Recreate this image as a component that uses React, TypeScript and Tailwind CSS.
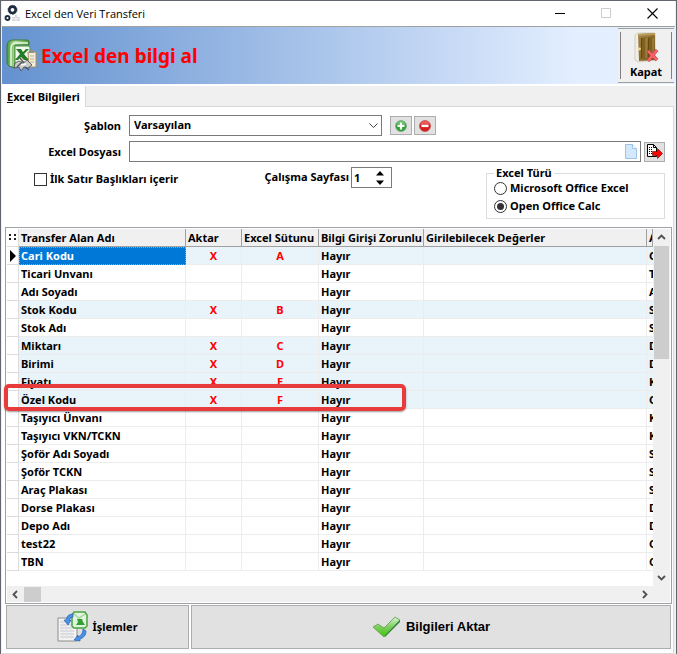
import type { ReactNode } from 'react'

type Row = { name: string; column?: string; next: string }

const rows: Row[] = [
    { name: 'Cari Kodu', column: 'A', next: 'C' },
    { name: 'Ticari Unvanı', next: 'T' },
    { name: 'Adı Soyadı', next: 'A' },
    { name: 'Stok Kodu', column: 'B', next: 'S' },
    { name: 'Stok Adı', next: 'S' },
    { name: 'Miktarı', column: 'C', next: 'D' },
    { name: 'Birimi', column: 'D', next: 'D' },
    { name: 'Fiyatı', column: 'E', next: 'K' },
    { name: 'Özel Kodu', column: 'F', next: 'C' },
    { name: 'Taşıyıcı Ünvanı', next: 'K' },
    { name: 'Taşıyıcı VKN/TCKN', next: 'K' },
    { name: 'Şoför Adı Soyadı', next: 'S' },
    { name: 'Şoför TCKN', next: 'S' },
    { name: 'Araç Plakası', next: 'S' },
    { name: 'Dorse Plakası', next: 'D' },
    { name: 'Depo Adı', next: 'D' },
    { name: 'test22', next: 'C' },
    { name: 'TBN', next: 'C' },
]

function GearsIcon() {
    return (
        <svg width="17" height="17" viewBox="0 0 17 17">
            <circle cx="8.500" cy="4.800" r="3.2" fill="none" stroke="#1f2c40" strokeWidth="2.6" />
            <circle cx="8.500" cy="4.800" r="4.500" fill="none" stroke="#1f2c40" strokeWidth=".8" strokeDasharray="1.8 1" />
            <circle cx="3.500" cy="13" r="2" fill="none" stroke="#1f2c40" strokeWidth="1.9" />
            <path d="M8 12h3v-2h2v2h3v4H8z" fill="#d3d5d8" />
            <path d="M8 14h8M12 12v4" stroke="#f4f4f4" />
        </svg>
    )
}

function ExcelIcon() {
    return (
        <svg width="31" height="33" viewBox="0 0 31 33">
            <defs>
                <linearGradient id="book" x1="0" y1="0" x2="1" y2="0">
                    <stop offset="0" stopColor="#4b9a3c" />
                    <stop offset=".4" stopColor="#b5e09f" />
                    <stop offset="1" stopColor="#4e9a3d" />
                </linearGradient>
            </defs>
            <path d="M1 6Q2 1 7 1h14q2 0 2 2v3H9v23l-6-2q-2-1-2-4z" fill="url(#book)" stroke="#3d7c35" />
            <path d="M5 27V9q0-5 5-5h12" fill="none" stroke="#e6f7df" strokeWidth="1.5" />
            <path d="M9 7h13q2 0 2 2v18H9z" fill="#f3f8ee" stroke="#4d9a3f" />
            <path d="M10 10h5l2 3 3-3h3l-5 5 5 6h-5l-3-3-3 3h-3l5-6z" fill="#267b27" />
            <path d="M22 13h8v15h-7z" fill="#f6edd6" stroke="#a48d62" />
            <path d="M23 11h5v3h-5z" fill="#90908c" />
            <path d="M24 17h4M24 20h4M24 23h4" stroke="#b5ae98" />
            <path d="M9 24l4-2 4 2 4-3 5 5-4 3-4-1-3 4-2-4-5 1z" fill="#c9cccb" stroke="#444747" strokeWidth=".8" />
            <path d="M14 19l4 5M11 28l5-5M19 28l4 3" stroke="#555" strokeWidth="1.4" />
            <path d="M15 26l5-1" stroke="#fff" strokeWidth="1.5" />
        </svg>
    )
}

function DoorIcon() {
    return (
        <svg width="26" height="32" viewBox="0 0 26 32">
            <defs>
                <linearGradient id="door" x1="0" y1="0" x2="1" y2="1">
                    <stop offset="0" stopColor="#a68646" />
                    <stop offset="1" stopColor="#77561a" />
                </linearGradient>
            </defs>
            <path d="M2 3l3-2h17v27l-16 2-4-2z" fill="#f0eee8" stroke="#c6bda5" strokeWidth=".7" />
            <path d="M5 2l17-1v27L6 29z" fill="url(#door)" />
            <path d="M5 2l17-1v2L5 4z" fill="#b99b5b" />
            <path d="M8 6l5-.5v21L8 27zM15 5.500l5-.5v20l-5 1z" fill="#80601f" />
            <path d="M8.500 6v20M15.500 6v19" stroke="#634610" />
            <path d="M13 6v20M20 6v19" stroke="#a98b4a" />
            <circle cx="6.500" cy="17" r="1.4" fill="#f1dd8f" />
            <path d="M15 19l9 9M24 18l-9 11" stroke="#c8414b" strokeWidth="3.500" />
            <path d="M15 19l9 9M24 18l-9 11" stroke="#fa6269" strokeWidth="2.2" />
        </svg>
    )
}

function RoundIcon({ minus }: { minus?: boolean }) {
    return (
        <svg width="12" height="12" viewBox="0 0 12 12">
            <circle cx="6" cy="6" r="5.5" fill={minus ? '#d91c1c' : '#2fa135'} stroke={minus ? '#ba4a4a' : '#78a97a'} strokeWidth=".7" />
            <path d="M1.5 5a4.5 4.5 0 0 1 9 0z" fill={minus ? '#f18080' : '#8fd08f'} opacity=".6" />
            <path d={minus ? 'M2.5 6h7' : 'M2.5 6h7M6 2.5v7'} stroke="#fff" strokeWidth="2.2" />
        </svg>
    )
}

function PageIcon() {
    return (
        <svg width="12" height="15" viewBox="0 0 12 15">
            <path d="M.5.5h7l4 4v10H.5z" fill="#d3e8fb" stroke="#9dc3e6" />
            <path d="M7.5.5v4h4" fill="#fff" stroke="#9dc3e6" />
        </svg>
    )
}

function ExportIcon() {
    return (
        <svg width="16" height="15" viewBox="0 0 16 15">
            <path d="M.5.5h6l3 3v9h-9z" fill="#fff" stroke="#000" />
            <path d="M6.5.5v3h3" fill="none" stroke="#000" />
            <path d="M2 3.5h3M2 5.5h3M2 7.5h3M2 9.5h3" stroke="#000" strokeDasharray="1 1" />
            <path d="M5.5 7.5h5v-3l5 5-5 5v-3h-5z" fill="#f00" stroke="#600" strokeWidth=".6" />
        </svg>
    )
}

function TransferIcon() {
    return (
        <svg width="31" height="32" viewBox="0 0 31 32">
            <path d="M1 7h19v23H1z" fill="#f4f4f4" stroke="#8c8c8c" />
            <path d="M3 11h14M3 14h14M3 17h14M3 20h14M3 23h14M3 26h14" stroke="#c3c5cb" />
            <path d="M6 9v19M10 9v19M14 9v19" stroke="#dedfe2" />
            <path d="M26 18q0 6-5 8v-2l-4 5 6 1v-2q6-2 6-8z" fill="#4b91e8" stroke="#2360ad" strokeWidth=".7" />
            <path d="M17 1h11l2 3v11l-2 2H17l-2-2V4z" fill="#e2f4dd" stroke="#45a541" strokeWidth="1.5" />
            <path d="M17 3l5 4 6-4" fill="none" stroke="#a3d59e" strokeWidth="1.5" />
            <path d="M20 8h5l1 3 2 3h-9l2-3z" fill="#359e36" />
            <path d="M16 3q-6 0-7 6H7l4 5 3-5h-2q1-3 4-3z" fill="#4b91e8" stroke="#2360ad" strokeWidth=".7" />
        </svg>
    )
}

function CheckIcon() {
    return (
        <svg width="29" height="22" viewBox="0 0 29 22">
            <defs>
                <linearGradient id="tick" x1="0" y1="0" x2="0" y2="1">
                    <stop offset="0" stopColor="#d8f0d2" />
                    <stop offset=".5" stopColor="#7ccf5e" />
                    <stop offset="1" stopColor="#3fc400" />
                </linearGradient>
            </defs>
            <path d="M1 11l5-3 6 4L23 1l5 3-16 17z" fill="url(#tick)" stroke="#5d9d50" strokeWidth=".8" />
            <path d="M13 19.500L28 4v2L13 21z" fill="#2f7f3b" />
        </svg>
    )
}

function Arrow({ d }: { d: string }) {
    return (
        <svg width="9" height="9" viewBox="0 0 9 9" fill="none" stroke="#505050" strokeWidth="1.8">
            <path d={d} />
        </svg>
    )
}

function HeadCell({ children }: { children?: ReactNode }) {
    return (
        <th className="overflow-hidden border-r border-b border-[#a0a0a0] bg-[#f0f0f0] px-[2px] text-left whitespace-nowrap">
            {children}
        </th>
    )
}

function TitleBar() {
    return (
        <div className="flex h-[26px] items-center border-b border-[#a0a0a0] bg-white pl-[2px]">
            <GearsIcon />
            <span className="ml-1 flex-1 font-['Open_Sans'] text-[11px] font-normal">Excel den Veri Transferi</span>
            <button aria-label="Simge durumuna küçült" className="flex w-[46px] justify-center">
                <svg width="11" height="11" stroke="#000"><path d="M0 5.5h10" /></svg>
            </button>
            <button aria-label="Ekranı kapla" className="flex w-[46px] justify-center">
                <svg width="11" height="11" fill="none" stroke="#ccc"><path d="M.5.5h9v9h-9z" /></svg>
            </button>
            <button aria-label="Pencereyi kapat" className="flex w-[46px] justify-center">
                <svg width="11" height="11" stroke="#000" strokeWidth="1.1"><path d="M.5.5l10 10M10.5.5l-10 10" /></svg>
            </button>
        </div>
    )
}

function Banner() {
    return (
        <div className="flex h-[57px] items-center bg-linear-to-r from-[#6492cf] to-[#e3eeff] to-85% pl-1">
            <ExcelIcon />
            <h1 className="ml-1 flex-1 font-['Noto_Sans'] text-[19px] font-bold text-[#ff0000]">Excel den bilgi al</h1>
            <button className="mr-[1px] flex h-[55px] w-[56px] border-y border-[#a0a0a0] bg-[#f0f0f0] px-[2px] py-[3px]">
                <span className="flex h-full flex-1 flex-col items-center justify-between border-x border-[#808080]">
                    <DoorIcon />
                    <span className="leading-[14px]">Kapat</span>
                </span>
            </button>
        </div>
    )
}

function Form() {
    return (
        <form className="flex flex-col gap-[5px] pt-2 pr-2">
            <div className="flex items-center">
                <label htmlFor="template" className="mr-2 w-[119px] text-right">Şablon</label>
                <div className="relative w-[253px]">
                    <select id="template" className="block h-[21px] w-full appearance-none border border-[#7a7a7a] bg-white px-1 pb-[2px] leading-[16px]">
                        <option>Varsayılan</option>
                    </select>
                    <svg className="pointer-events-none absolute top-2 right-1" width="9" height="6" fill="none" stroke="#444">
                        <path d="M.5.5l4 4 4-4" />
                    </svg>
                </div>
                <button type="button" aria-label="Ekle" className="ml-2 flex h-[19px] w-[22px] items-center justify-center border border-[#adadad] bg-[#e1e1e1]">
                    <RoundIcon />
                </button>
                <button type="button" aria-label="Sil" className="ml-[2px] flex h-[19px] w-[22px] items-center justify-center border border-[#adadad] bg-[#e1e1e1]">
                    <RoundIcon minus />
                </button>
            </div>
            <div className="flex items-center">
                <label htmlFor="file" className="mr-2 w-[119px] text-right">Excel Dosyası</label>
                <div className="relative flex-1">
                    <input id="file" type="text" className="block h-[21px] w-full border border-[#7a7a7a] bg-white px-1" />
                    <span className="pointer-events-none absolute top-[3px] right-[4px]"><PageIcon /></span>
                </div>
                <button type="button" aria-label="Dosya seç" className="ml-[3px] flex h-[20px] w-[21px] items-center justify-center border border-[#adadad] bg-[#e1e1e1]">
                    <ExportIcon />
                </button>
            </div>
            <div className="flex items-start">
                <label className="mt-[5px] ml-8 flex w-[218px] items-center gap-[3px]">
                    <input type="checkbox" className="size-[13px] appearance-none border border-[#333] bg-white checked:bg-[#333]" />
                    İlk Satır Başlıkları içerir
                </label>
                <label htmlFor="sheet" className="mt-[3px] w-[97px] text-right">Çalışma Sayfası</label>
                <div className="ml-[2px] flex h-[21px] w-[41px] items-center border border-[#7a7a7a] bg-white pl-[2px]">
                    <input id="sheet" type="text" defaultValue="1" className="w-[22px]" />
                    <span className="flex flex-col gap-1">
                        <button type="button" aria-label="Artır"><svg className="block" width="8" height="5"><path d="M4 0l4 4.5H0z" /></svg></button>
                        <button type="button" aria-label="Azalt"><svg className="block" width="8" height="5"><path d="M4 5l4-4.5H0z" /></svg></button>
                    </span>
                </div>
                <fieldset className="mb-2 ml-auto h-[52px] w-[179px] border border-[#dcdcdc] px-[7px]">
                    <legend className="px-[2px] leading-[12px]">Excel Türü</legend>
                    <label className="flex h-[18px] items-center gap-[3px]">
                        <input type="radio" name="kind" className="size-[13px] appearance-none rounded-full border border-[#333] bg-white p-[2px] checked:bg-[#333] checked:bg-clip-content" />
                        Microsoft Office Excel
                    </label>
                    <label className="flex h-[18px] items-center gap-[3px]">
                        <input type="radio" name="kind" defaultChecked className="size-[13px] appearance-none rounded-full border border-[#333] bg-white p-[2px] checked:bg-[#333] checked:bg-clip-content" />
                        Open Office Calc
                    </label>
                </fieldset>
            </div>
        </form>
    )
}

function FieldTable() {
    return (
        <div className="relative mr-[1px] ml-[3px] border border-[#a0a0a8] bg-white p-[1px]">
            <div className="flex">
                <div className="h-[357px] min-w-0 flex-1 overflow-hidden">
                    <table className="w-full table-fixed border-separate border-spacing-0">
                        <colgroup>
                            <col className="w-[12px]" />
                            <col className="w-[167px]" />
                            <col className="w-[56px]" />
                            <col className="w-[77px]" />
                            <col className="w-[105px]" />
                            <col />
                            <col className="w-[6px]" />
                        </colgroup>
                        <thead>
                            <tr className="h-[18px]">
                                <th className="border-r border-b border-[#dcdcdc]">
                                    <svg className="block" width="10" height="10"><path d="M2 1h2v2H2zM7 1h2v2H7zM2 5h2v2H2zM7 5h2v2H7z" fill="#222" /></svg>
                                </th>
                                <HeadCell>Transfer Alan Adı</HeadCell>
                                <HeadCell>Aktar</HeadCell>
                                <HeadCell>Excel Sütunu</HeadCell>
                                <HeadCell>Bilgi Girişi Zorunlu</HeadCell>
                                <HeadCell>Girilebilecek Değerler</HeadCell>
                                <HeadCell>A</HeadCell>
                            </tr>
                        </thead>
                        <tbody>
                            {rows.map((row, i) => (
                                <tr key={row.name} className={row.column ? 'h-[18px] bg-[#e8f3fa]' : 'h-[18px] bg-white'}>
                                    <td className="border-r border-b border-[#dcdcdc] bg-white">
                                        {i === 0 && <svg className="ml-[3px] block" width="7" height="12"><path d="M0 0l6 6-6 6z" /></svg>}
                                    </td>
                                    <td className={i === 0 ? 'border border-dotted border-[#f09040] bg-[#0078d7] px-[1px] text-white' : 'border-r border-b border-[#ececec] px-[2px]'}>
                                        {row.name}
                                    </td>
                                    <td className="border-r border-b border-[#ececec] text-center text-[#ff0000]">{row.column && 'X'}</td>
                                    <td className="border-r border-b border-[#ececec] text-center text-[#ff0000]">{row.column}</td>
                                    <td className="border-r border-b border-[#ececec] px-[2px]">Hayır</td>
                                    <td className="border-r border-b border-[#ececec]"></td>
                                    <td className="overflow-hidden border-b border-[#ececec] pl-[2px]">{row.next}</td>
                                </tr>
                            ))}
                        </tbody>
                    </table>
                </div>
                <div className="flex w-[17px] flex-col items-center bg-[#f0f0f0]">
                    <span className="flex h-[17px] items-center"><Arrow d="M1 6l3.5-3.5L8 6" /></span>
                    <span className="w-[15px] flex-1"><span className="block h-[113px] bg-[#cdcdcd]"></span></span>
                    <span className="flex h-[17px] items-center"><Arrow d="M1 3l3.5 3.5L8 3" /></span>
                </div>
            </div>
            <div className="flex h-[16px] items-center bg-[#f0f0f0] pr-[17px]">
                <span className="flex w-[17px] justify-center"><Arrow d="M6 1L2.5 4.5L6 8" /></span>
                <span className="h-[15px] w-[17px] bg-[#cdcdcd]"></span>
                <span className="ml-auto flex w-[17px] justify-center"><Arrow d="M3 1l3.5 3.5L3 8" /></span>
            </div>
            <div className="pointer-events-none absolute top-[156px] -left-[2px] h-[27px] w-[402px] rounded-[5px] border-4 border-[#e83c3c] shadow-[0_1px_2px_#0006]"></div>
        </div>
    )
}

export default function App() {
    return (
        <div className="border border-[#62666f] bg-[#f0f0f0] px-[1px] font-['Noto_Sans',sans-serif] text-[11px] leading-[14px] font-bold text-black">
            <TitleBar />
            <Banner />
            <div className="flex h-[23px] items-end border-t-2 border-white">
                <button className="h-[21px] border-r border-[#d9d9d9] bg-white px-[5px]"><u>E</u>xcel Bilgileri</button>
                <span className="mr-[1px] flex-1 border-b border-[#d9d9d9]"></span>
            </div>
            <div className="mr-[1px] border-r border-b border-[#d9d9d9] bg-white">
                <Form />
                <FieldTable />
                <div className="mt-[1px] flex gap-[2px] pr-[2px] pb-1 pl-1">
                    <button className="flex h-[44px] w-[183px] items-center justify-center gap-1 border border-[#adadad] bg-[#e1e1e1]">
                        <TransferIcon />
                        İşlemler
                    </button>
                    <button className="flex h-[44px] flex-1 items-center justify-center gap-[5px] border border-[#adadad] bg-[#e1e1e1] font-['Liberation_Sans'] text-[13px]">
                        <CheckIcon />
                        Bilgileri Aktar
                    </button>
                </div>
            </div>
            <div className="h-[1px]"></div>
        </div>
    )
}
